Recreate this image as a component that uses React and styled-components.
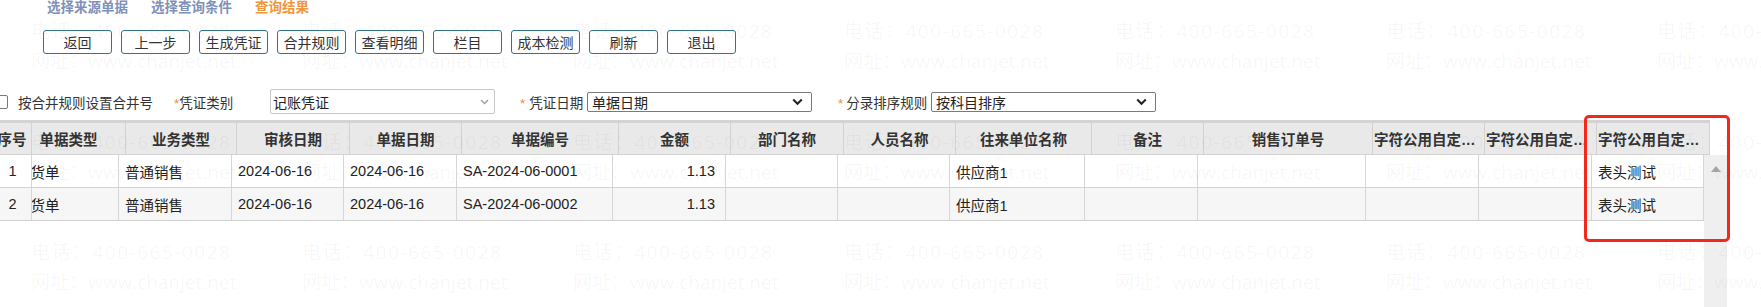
import React from 'react';
import styled, { createGlobalStyle } from 'styled-components';

const GlobalStyle = createGlobalStyle`
  html, body {
    margin: 0;
    padding: 0;
    background: #fff;
  }
  body {
    font-family: "Liberation Sans", "Noto Sans CJK SC", sans-serif;
    color: #333;
  }
`;

const Page = styled.div`
  position: relative;
  width: 1761px;
  height: 307px;
  overflow: hidden;
`;

const Tabs = styled.div`
  display: flex;
  gap: 23px;
  padding-left: 47px;
  height: 15px;
  align-items: center;
  font-size: 13.5px;
  line-height: 15px;
  font-weight: bold;
`;

const Tab = styled.span`
  color: ${(p) => (p.$active ? '#f0963e' : '#7f90b9')};
`;

const Toolbar = styled.div`
  display: flex;
  gap: 9px;
  padding-left: 43px;
  margin-top: 15px;
`;

const Button = styled.button`
  width: 69px;
  height: 24px;
  padding: 0;
  background: #fff;
  border: 1px solid #35728d;
  border-radius: 3px;
  font-family: inherit;
  font-size: 14px;
  color: #333;
  cursor: pointer;
`;

const FilterRow = styled.div`
  display: flex;
  align-items: center;
  height: 25px;
  margin-top: 35px;
  font-size: 13.5px;
`;

const Field = styled.div`
  display: flex;
  align-items: center;
  margin-left: ${(p) => p.$ml || 0}px;
`;

const Check = styled.span`
  width: 12px;
  height: 12px;
  border: 1px solid #777;
  border-radius: 2px;
  background: #fff;
  margin-right: 10px;
`;

const Label = styled.span`
  width: ${(p) => (p.$w ? `${p.$w}px` : 'auto')};
  white-space: nowrap;
  color: #333;
`;

const Star = styled.span`
  color: #f08a3a;
  margin-right: ${(p) => p.$gap || 0}px;
`;

const Select = styled.div`
  box-sizing: border-box;
  width: 225px;
  height: ${(p) => (p.$light ? 25 : 20)}px;
  border: 1px solid ${(p) => (p.$light ? '#c8c8c8' : '#7a7a7a')};
  border-radius: 2px;
  display: flex;
  align-items: center;
  justify-content: space-between;
  padding: 0 ${(p) => (p.$light ? 5 : 8)}px 0 ${(p) => (p.$light ? 2 : 4)}px;
  font-size: 14px;
  color: #222;
  background: #fff;
`;

const Table = styled.div`
  margin-top: 6px;
`;

const HeadRow = styled.div`
  display: flex;
  width: 1710px;
  height: 31px;
  border-top: 3px solid #d3d3d3;
  border-bottom: 1px solid #d3d3d3;
  background: #e9e9e9;
`;

const HeadCell = styled.div`
  box-sizing: border-box;
  flex: none;
  width: ${(p) => p.$w}px;
  border-right: 1px solid #d2d2d2;
  display: flex;
  align-items: center;
  justify-content: ${(p) => (p.$left ? 'flex-start' : 'center')};
  padding: 0 ${(p) => p.$pr || 0}px 0 ${(p) => (p.$left ? 1 : 0)}px;
  font-size: 14.5px;
  font-weight: bold;
  color: #333;
  overflow: hidden;
  white-space: nowrap;
`;

const Ellip = styled.span`
  display: block;
  overflow: hidden;
  text-overflow: ellipsis;
  white-space: nowrap;
`;

const BodyWrap = styled.div`
  display: flex;
  align-items: flex-start;
`;

const Rows = styled.div`
  width: 1704px;
`;

const Row = styled.div`
  display: flex;
  height: 32px;
  border-bottom: 1px solid #d3d3d3;
  background: ${(p) => (p.$alt ? '#f6f6f6' : '#fff')};
`;

const Cell = styled.div`
  box-sizing: border-box;
  flex: none;
  width: ${(p) => p.$w}px;
  border-right: 1px solid #d6d6d6;
  display: flex;
  align-items: center;
  justify-content: ${(p) =>
    p.$align === 'right' ? 'flex-end' : p.$align === 'center' ? 'center' : 'flex-start'};
  padding: ${(p) =>
    p.$align === 'right' ? '0 10px 0 0' : p.$align === 'center' ? '0 6px 0 0' : '0 0 0 6px'};
  font-size: 14.5px;
  color: #222;
  overflow: hidden;
  white-space: nowrap;
`;

const Shifted = styled.span`
  margin-left: ${(p) => p.$shift}px;
`;

const Scrollbar = styled.div`
  width: 23px;
  height: 220px;
  background: #efefef;
  display: flex;
  justify-content: center;
  padding-top: 11px;
  box-sizing: border-box;
`;

const Watermark = styled.div`
  position: absolute;
  inset: 0;
  pointer-events: none;
  display: grid;
  grid-template-columns: repeat(7, 271px);
  grid-auto-rows: 110.5px;
  padding: 16px 0 0 31px;
  font-family: "Open Sans", "Noto Sans CJK SC", sans-serif;
  font-size: 19px;
  line-height: 30px;
  color: rgba(0, 0, 0, 0.045);
  white-space: nowrap;
`;

const Mark = styled.div`
  display: flex;
  flex-direction: column;
`;

const MarkLine = styled.span`
  letter-spacing: ${(p) => p.$ls}px;
`;

const Highlight = styled.div`
  position: absolute;
  left: 1584px;
  top: 115px;
  width: 146px;
  height: 127px;
  box-sizing: border-box;
  border: 3px solid #f2281c;
  border-radius: 5px;
  pointer-events: none;
`;

const Chevron = ({ light }) =>
  light ? (
    <svg width="9" height="6" viewBox="0 0 9 6">
      <path d="M1 1l3.5 3.5L8 1" fill="none" stroke="#9a9a9a" strokeWidth="1.3" />
    </svg>
  ) : (
    <svg width="11" height="8" viewBox="0 0 11 8">
      <path d="M1.2 1.5l4.3 4.3 4.3-4.3" fill="none" stroke="#222" strokeWidth="2" />
    </svg>
  );

const columns = [
  { title: '序号', hw: 32, bw: 32, hpr: 7, align: 'center' },
  { title: '单据类型', hw: 94, bw: 87, hpr: 20, shift: -22 },
  { title: '业务类型', hw: 111, bw: 113 },
  { title: '审核日期', hw: 113, bw: 112 },
  { title: '单据日期', hw: 112, bw: 113 },
  { title: '单据编号', hw: 157, bw: 156 },
  { title: '金额', hw: 112, bw: 113, align: 'right' },
  { title: '部门名称', hw: 113, bw: 112 },
  { title: '人员名称', hw: 112, bw: 112 },
  { title: '往来单位名称', hw: 136, bw: 135 },
  { title: '备注', hw: 112, bw: 113 },
  { title: '销售订单号', hw: 169, bw: 168 },
  { title: '字符公用自定义项1', hw: 112, bw: 113, left: true },
  { title: '字符公用自定义项2', hw: 112, bw: 113, left: true },
  { title: '字符公用自定义项3', hw: 113, bw: 112, left: true },
];

const rows = [
  ['1', '销货单', '普通销售', '2024-06-16', '2024-06-16', 'SA-2024-06-0001', '1.13', '', '', '供应商1', '', '', '', '', '表头测试'],
  ['2', '销货单', '普通销售', '2024-06-16', '2024-06-16', 'SA-2024-06-0002', '1.13', '', '', '供应商1', '', '', '', '', '表头测试'],
];

const buttons = ['返回', '上一步', '生成凭证', '合并规则', '查看明细', '栏目', '成本检测', '刷新', '退出'];

const App = () => {
  const marks = Array.from({ length: 21 });

  return (
    <Page>
      <GlobalStyle />
      <Tabs>
        <Tab>选择来源单据</Tab>
        <Tab>选择查询条件</Tab>
        <Tab $active>查询结果</Tab>
      </Tabs>

      <Toolbar>
        {buttons.map((b) => (
          <Button key={b}>{b}</Button>
        ))}
      </Toolbar>

      <FilterRow>
        <Field $ml={-6}>
          <Check />
          <Label>按合并规则设置合并号</Label>
        </Field>
        <Field $ml={21}>
          <Label $w={96}>
            <Star>*</Star>凭证类别
          </Label>
          <Select $light>
            记账凭证
            <Chevron light />
          </Select>
        </Field>
        <Field $ml={25}>
          <Label $w={67}>
            <Star $gap={4}>*</Star>凭证日期
          </Label>
          <Select>
            单据日期
            <Chevron />
          </Select>
        </Field>
        <Field $ml={26}>
          <Label $w={93}>
            <Star $gap={3}>*</Star>分录排序规则
          </Label>
          <Select>
            按科目排序
            <Chevron />
          </Select>
        </Field>
      </FilterRow>

      <Table>
        <HeadRow>
          {columns.map((c) => (
            <HeadCell key={c.title} $w={c.hw} $pr={c.hpr} $left={c.left}>
              {c.left ? <Ellip>{c.title}</Ellip> : c.title}
            </HeadCell>
          ))}
        </HeadRow>
        <BodyWrap>
          <Rows>
            {rows.map((r, i) => (
              <Row key={i} $alt={i % 2 === 1}>
                {r.map((v, j) => (
                  <Cell key={j} $w={columns[j].bw} $align={columns[j].align}>
                    {columns[j].shift ? <Shifted $shift={columns[j].shift}>{v}</Shifted> : v}
                  </Cell>
                ))}
              </Row>
            ))}
          </Rows>
          <Scrollbar>
            <svg width="10" height="6" viewBox="0 0 10 6">
              <path d="M0 6L5 0l5 6z" fill="#a6a6a6" />
            </svg>
          </Scrollbar>
        </BodyWrap>
      </Table>

      <Watermark>
        {marks.map((_, i) => (
          <Mark key={i}>
            <MarkLine $ls={1.5}>电话：400-665-0028</MarkLine>
            <MarkLine $ls={0}>网址：www.chanjet.net</MarkLine>
          </Mark>
        ))}
      </Watermark>

      <Highlight />
    </Page>
  );
};

export default App;
